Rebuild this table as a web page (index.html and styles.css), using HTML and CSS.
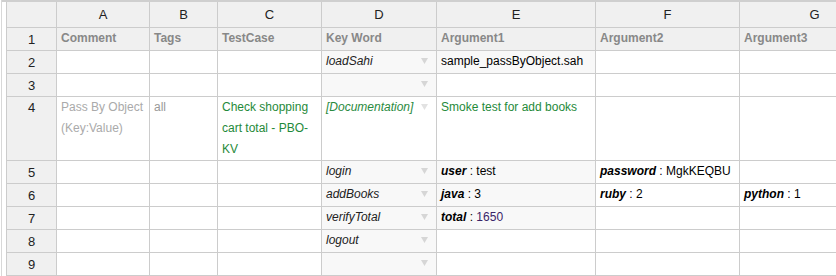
FILE: index.html
```html
<!DOCTYPE html>
<html>
<head>
<meta charset="utf-8">
<link rel="stylesheet" href="styles.css">
</head>
<body>
<div class="frame">
  <div class="inner">
    <table class="grid">
      <colgroup>
        <col class="c-rh"><col class="c-a"><col class="c-b"><col class="c-c"><col class="c-d"><col class="c-e"><col class="c-f"><col class="c-g">
      </colgroup>
      <thead>
        <tr class="colhead">
          <th class="corner"></th><th>A</th><th>B</th><th>C</th><th>D</th><th>E</th><th>F</th><th>G</th>
        </tr>
      </thead>
      <tbody>
        <tr>
          <th class="rowhead">1</th>
          <td class="title">Comment</td><td class="title">Tags</td><td class="title">TestCase</td><td class="title">Key Word</td><td class="title">Argument1</td><td class="title">Argument2</td><td class="title">Argument3</td>
        </tr>
        <tr>
          <th class="rowhead">2</th>
          <td></td><td></td><td></td>
          <td class="kw">loadSahi<span class="arrow"><svg width="7" height="6" viewBox="0 0 7 6"><polygon points="0,0 7,0 3.5,6" fill="#d6d6d6"/></svg></span></td>
          <td class="arg">sample_passByObject.sah</td><td></td><td></td>
        </tr>
        <tr>
          <th class="rowhead">3</th>
          <td></td><td></td><td></td>
          <td class="kw"><span class="arrow"><svg width="7" height="6" viewBox="0 0 7 6"><polygon points="0,0 7,0 3.5,6" fill="#d6d6d6"/></svg></span></td>
          <td></td><td></td><td></td>
        </tr>
        <tr class="tall">
          <th class="rowhead">4</th>
          <td class="comment">Pass By Object (Key:Value)</td>
          <td class="tag">all</td>
          <td class="green">Check shopping cart total - PBO-KV</td>
          <td class="doc">[Documentation]<span class="arrow"><svg width="7" height="6" viewBox="0 0 7 6"><polygon points="0,0 7,0 3.5,6" fill="#e2e2e2"/></svg></span></td>
          <td class="green">Smoke test for add books</td><td></td><td></td>
        </tr>
        <tr>
          <th class="rowhead">5</th>
          <td></td><td></td><td></td>
          <td class="kw">login<span class="arrow"><svg width="7" height="6" viewBox="0 0 7 6"><polygon points="0,0 7,0 3.5,6" fill="#d6d6d6"/></svg></span></td>
          <td class="arg"><b>user</b> : test</td>
          <td><b>password</b> : MgkKEQBU</td><td></td>
        </tr>
        <tr>
          <th class="rowhead">6</th>
          <td></td><td></td><td></td>
          <td class="kw">addBooks<span class="arrow"><svg width="7" height="6" viewBox="0 0 7 6"><polygon points="0,0 7,0 3.5,6" fill="#d6d6d6"/></svg></span></td>
          <td class="arg"><b>java</b> : 3</td>
          <td><b>ruby</b> : 2</td>
          <td><b>python</b> : 1</td>
        </tr>
        <tr>
          <th class="rowhead">7</th>
          <td></td><td></td><td></td>
          <td class="kw">verifyTotal<span class="arrow"><svg width="7" height="6" viewBox="0 0 7 6"><polygon points="0,0 7,0 3.5,6" fill="#d6d6d6"/></svg></span></td>
          <td class="arg"><b>total</b> : <span class="num">1650</span></td><td></td><td></td>
        </tr>
        <tr>
          <th class="rowhead">8</th>
          <td></td><td></td><td></td>
          <td class="kw">logout<span class="arrow"><svg width="7" height="6" viewBox="0 0 7 6"><polygon points="0,0 7,0 3.5,6" fill="#d6d6d6"/></svg></span></td>
          <td></td><td></td><td></td>
        </tr>
        <tr>
          <th class="rowhead">9</th>
          <td></td><td></td><td></td>
          <td class="kw"><span class="arrow"><svg width="7" height="6" viewBox="0 0 7 6"><polygon points="0,0 7,0 3.5,6" fill="#d6d6d6"/></svg></span></td>
          <td></td><td></td><td></td>
        </tr>
      </tbody>
    </table>
  </div>
</div>
</body>
</html>
```
FILE: styles.css
```css
html, body {
  margin: 0;
  padding: 0;
  background: #fff;
  overflow: hidden;
}
body {
  width: 836px;
  height: 276px;
  font-family: "Liberation Sans", Arial, sans-serif;
  font-size: 12px;
  color: #000;
}
.frame {
  margin-left: 1px;
  border-left: 1px solid #d8d8d8;
  height: 276px;
  overflow: hidden;
}
.inner {
  border-top: 2px solid #cfcfcf;
  padding-left: 4px;
  overflow: hidden;
}
.grid {
  border-collapse: separate;
  border-spacing: 0;
  table-layout: fixed;
  width: 884px;
}
.c-rh { width: 51px; }
.c-a { width: 93px; }
.c-b { width: 68px; }
.c-c { width: 104px; }
.c-d { width: 115px; }
.c-e { width: 159px; }
.c-f { width: 144px; }
.c-g { width: 150px; }

.grid th, .grid td {
  box-sizing: border-box;
  border-right: 1px solid #ccc;
  border-bottom: 1px solid #ccc;
  padding: 0 4px;
  line-height: 21px;
  vertical-align: top;
  text-align: left;
  overflow: hidden;
  font-weight: normal;
  white-space: normal;
  background: #fff;
}
.grid tr { height: 23px; }
.grid .colhead { height: 26px; }
.grid .colhead th {
  background: #f0f0f0;
  color: #222;
  font-size: 13px;
  text-align: center;
  vertical-align: middle;
  line-height: 25px;
}
.grid th.corner,
.grid th.rowhead {
  border-left: 1px solid #ccc;
}
.grid th.rowhead {
  background: #f0f0f0;
  color: #222;
  font-size: 13px;
  text-align: center;
  vertical-align: middle;
}
.grid tr.tall th.rowhead {
  vertical-align: top;
}
.grid td.title {
  background: #f0f0f0;
  color: #888;
  font-weight: bold;
}
.grid td.kw {
  background: #f8f8f8;
  font-style: italic;
  color: #222;
}
.grid td.doc {
  font-style: italic;
  color: #2a8a3e;
}
.grid td.arg {
  background: #f8f8f8;
}
.grid td b {
  font-weight: bold;
  font-style: italic;
}
.grid td.comment { color: #aaa; }
.grid td.tag { color: #999; }
.grid td.green { color: #1f8a3a; }
.num { color: #3a2468; }

.arrow {
  float: right;
  width: 16px;
  height: 21px;
  display: flex;
  align-items: center;
  justify-content: center;
  margin-top: -1px;
}
.arrow svg { display: block; }
```
